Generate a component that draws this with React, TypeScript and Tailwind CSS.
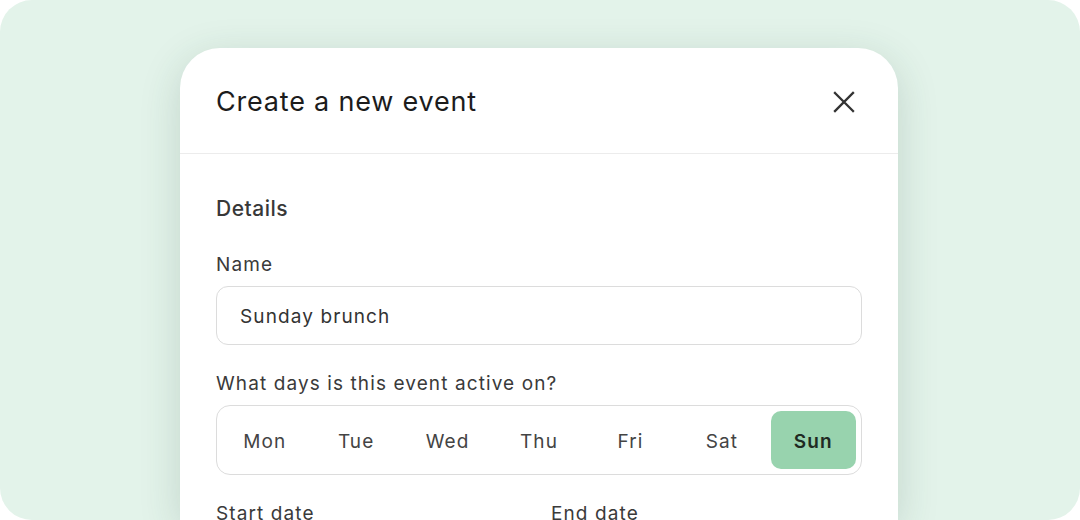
import type { ReactElement } from 'react';

const days = ['Mon', 'Tue', 'Wed', 'Thu', 'Fri', 'Sat', 'Sun'];

function CloseIcon(): ReactElement {
  return (
    <svg width="22" height="22" viewBox="0 0 22 22" fill="none" stroke="#333333" strokeWidth="2.3" strokeLinecap="square">
      <path d="M2 2L20 20M20 2L2 20" />
    </svg>
  );
}

export default function App(): ReactElement {
  const selected = 'Sun';

  return (
    <div className="h-[520px] w-[1080px] overflow-hidden bg-white font-['Inter','Noto_Sans',sans-serif]">
      <div className="flex h-full w-full justify-center rounded-[32px] bg-[#e3f3ea] pt-12">
        <div className="ml-[-2px] flex w-[718px] flex-col rounded-t-[40px] bg-white shadow-[0_10px_40px_rgba(40,80,60,0.18)]">
          <div className="flex h-[106px] shrink-0 items-center justify-between border-b border-[#ececec] px-9">
            <h1 className="pt-1 text-[27px] font-normal tracking-[0.8px] text-[#1c1c1c]">Create a new event</h1>
            <button type="button" className="mr-[6px] mt-[2px] flex h-6 w-6 items-center justify-center">
              <CloseIcon />
            </button>
          </div>

          <div className="flex flex-col px-9 pt-[41px] tracking-[1.1px]">
            <h2 className="text-[21px] font-medium leading-7 tracking-[0.5px] text-[#383838]">Details</h2>

            <label className="mt-[30px] text-[19px] leading-6 text-[#3a3a3a]">Name</label>
            <div className="mt-[9px] flex h-[59px] items-center rounded-xl border border-[#dcdcdc] px-[23px] pt-[3px] text-[19px] text-[#333333]">
              Sunday brunch
            </div>

            <label className="mt-[27px] text-[19px] leading-6 text-[#3a3a3a]">What days is this event active on?</label>
            <div className="mt-[9px] flex h-[70px] gap-[6px] rounded-[14px] border border-[#dcdcdc] p-[5px]">
              {days.map((day) =>
                day === selected ? (
                  <div
                    key={day}
                    className="flex flex-1 items-center justify-center rounded-[10px] bg-[#98d3ae] pt-[4px] text-[19px] font-semibold text-[#1f2a22]"
                  >
                    {day}
                  </div>
                ) : (
                  <div key={day} className="flex flex-1 items-center justify-center pt-[4px] text-[19px] text-[#444444]">
                    {day}
                  </div>
                ),
              )}
            </div>

            <div className="mt-[27px] grid grid-cols-2 gap-6">
              <span className="text-[19px] leading-6 text-[#3a3a3a]">Start date</span>
              <span className="text-[19px] leading-6 text-[#3a3a3a]">End date</span>
            </div>
          </div>
        </div>
      </div>
    </div>
  );
}
